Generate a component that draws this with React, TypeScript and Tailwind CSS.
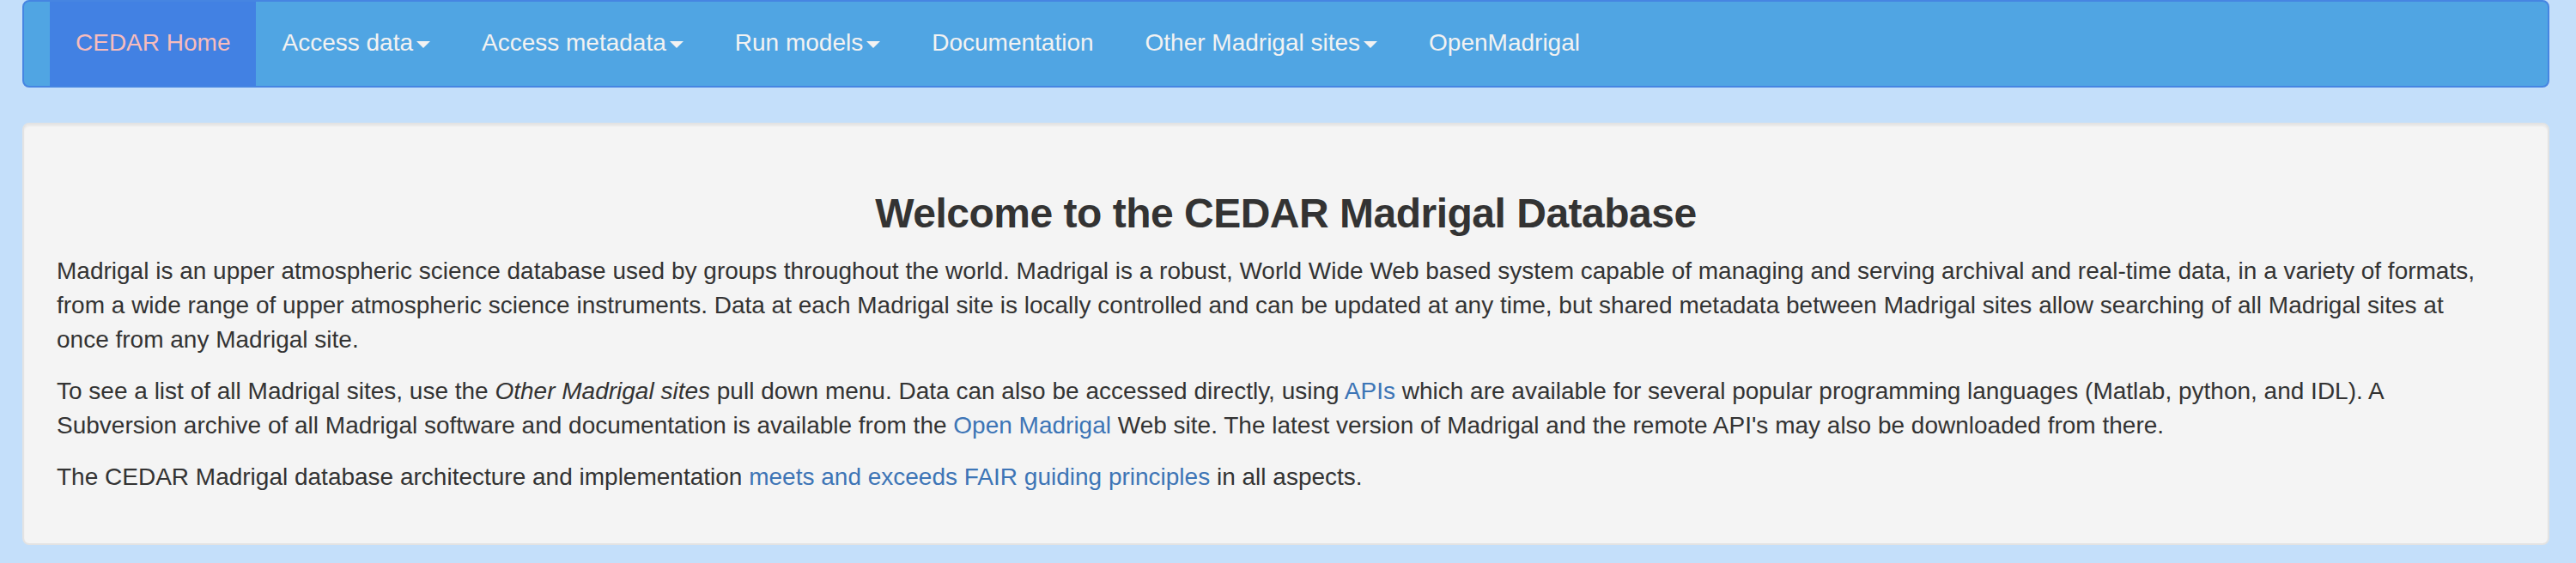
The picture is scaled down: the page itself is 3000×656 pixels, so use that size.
import React from "react";

const Caret = () => (
  <span className="inline-block w-0 h-0 ml-[4px] align-middle border-t-[8px] border-t-[#f2f2f2] border-x-[8px] border-x-transparent" />
);

const navItems: { label: string; caret?: boolean }[] = [
  { label: "Access data", caret: true },
  { label: "Access metadata", caret: true },
  { label: "Run models", caret: true },
  { label: "Documentation" },
  { label: "Other Madrigal sites", caret: true },
  { label: "OpenMadrigal" },
];

export default function App() {
  return (
    <div
      className="min-h-[656px] w-full bg-[#c4dffa] text-[#333333]"
      style={{ fontFamily: '"Liberation Sans", Arial, Helvetica, sans-serif' }}
    >
      <div className="pl-[26px] pr-[31px]">
        <nav className="h-[102px] rounded-[8px] border-2 border-[#4685e2] bg-[#50a5e3] overflow-hidden flex pl-[30px]">
          <a className="block h-full bg-[#4281e3] px-[30px] pt-[28px] text-[28px] leading-[40px] text-[#f7bcbc]">
            CEDAR Home
          </a>
          {navItems.map((it) => (
            <a
              key={it.label}
              className="block h-full px-[30px] pt-[28px] text-[28px] leading-[40px] text-[#f2f2f2] whitespace-nowrap"
            >
              {it.label}
              {it.caret && <Caret />}
            </a>
          ))}
        </nav>

        <div className="mt-[41px] rounded-[8px] border-2 border-[#e3e3e3] bg-[#f4f4f4] shadow-[inset_0_2px_2px_rgba(0,0,0,0.05)] px-[38px] pt-[38px] pb-[37px]">
          <h3 className="mt-[40px] mb-[20px] text-center text-[48px] leading-[1.1] font-bold tracking-[-0.5px] text-[#333333]">
            Welcome to the CEDAR Madrigal Database
          </h3>
          <p className="text-[28px] leading-[40px] mb-[20px]">
            Madrigal is an upper atmospheric science database used by groups throughout the world. Madrigal is a
            robust, World Wide Web based system capable of managing and serving archival and real-time data, in a
            variety of formats,
            <br />
            from a wide range of upper atmospheric science instruments. Data at each Madrigal site is locally
            controlled and can be updated at any time, but shared metadata between Madrigal sites allow searching of
            all Madrigal sites at
            <br />
            once from any Madrigal site.
          </p>
          <p className="text-[28px] leading-[40px] mb-[20px]">
            To see a list of all Madrigal sites, use the <em>Other Madrigal sites</em> pull down menu. Data can also be
            accessed directly, using <a className="text-[#3d75b6]">APIs</a> which are available for several popular
            programming languages (Matlab, python, and IDL). A
            <br />
            Subversion archive of all Madrigal software and documentation is available from the{" "}
            <a className="text-[#3d75b6]">Open Madrigal</a> Web site. The latest version of Madrigal and the remote
            API's may also be downloaded from there.
          </p>
          <p className="text-[28px] leading-[40px] mb-[20px]">
            The CEDAR Madrigal database architecture and implementation{" "}
            <a className="text-[#3d75b6]">meets and exceeds FAIR guiding principles</a> in all aspects.
          </p>
        </div>
      </div>
    </div>
  );
}
